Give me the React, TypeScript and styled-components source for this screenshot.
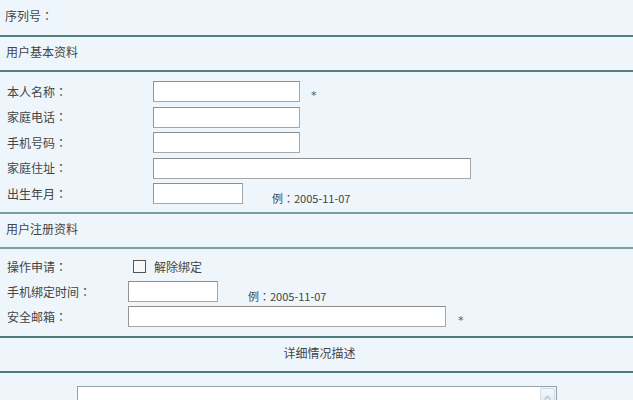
import React from "react";
import styled, { createGlobalStyle } from "styled-components";

const Global = createGlobalStyle`
  html, body { margin: 0; padding: 0; background: #eef6fc; }
  body {
    font-family: "Noto Sans CJK SC", "DejaVu Sans", sans-serif;
    font-size: 12px;
    color: #444;
    width: 633px;
    height: 400px;
    overflow: hidden;
  }
`;

const Page = styled.div`
  width: 633px;
  height: 400px;
  overflow: hidden;
  background: #eef6fc;
`;

const Rule = styled.div<{ $tone?: string }>`
  height: 2px;
  background: ${(p) => p.$tone || "#5f8b8c"};
`;

const TopRow = styled.div`
  height: 35px;
  display: flex;
  align-items: center;
  padding: 0 0 4px 5px;
  box-sizing: border-box;
  line-height: 1;
`;

const Header = styled.div<{ $center?: boolean }>`
  height: 33px;
  display: flex;
  align-items: center;
  justify-content: ${(p) => (p.$center ? "center" : "flex-start")};
  padding: 0 0 3px 6px;
  box-sizing: border-box;
  line-height: 1;
`;

const Body = styled.div<{ $top: number; $bottom: number }>`
  padding: ${(p) => p.$top}px 0 ${(p) => p.$bottom}px 0;
  display: flex;
  flex-direction: column;
`;

const Row = styled.div<{ $h?: number }>`
  height: ${(p) => p.$h || 25}px;
  display: flex;
  align-items: center;
`;

const Label = styled.div<{ $w: number }>`
  width: ${(p) => p.$w}px;
  flex: none;
  padding-left: 7px;
  box-sizing: border-box;
  line-height: 1;
  white-space: nowrap;
`;

const Colon = styled.span`
  font-family: "Noto Sans CJK TC", "Noto Sans CJK SC", sans-serif;
`;

const Input = styled.div<{ $w: number }>`
  width: ${(p) => p.$w}px;
  height: 21px;
  box-sizing: border-box;
  background: #fff;
  border: 1px solid #a7a7a7;
  border-top-color: #8f8f8f;
  border-left-color: #959595;
  flex: none;
`;

const Star = styled.span<{ $gap: number }>`
  margin-left: ${(p) => p.$gap}px;
  font-family: "DejaVu Sans", sans-serif;
  font-size: 11px;
  color: #555;
  position: relative;
  top: 4px;
`;

const Hint = styled.span<{ $gap: number }>`
  margin-left: ${(p) => p.$gap}px;
  position: relative;
  top: 4px;
  font-size: 11px;
  color: #444;
  white-space: nowrap;
`;

const Check = styled.span`
  width: 11px;
  height: 11px;
  border: 1px solid #555;
  background: #f8f8f8;
  margin-left: 5px;
  flex: none;
`;

const CheckText = styled.span`
  margin-left: 8px;
  line-height: 1;
`;

const AreaWrap = styled.div`
  padding: 13px 0 0 77px;
`;

const Area = styled.div`
  width: 480px;
  height: 60px;
  box-sizing: border-box;
  background: #fff;
  border: 1px solid #93a3a6;
  display: flex;
  justify-content: flex-end;
`;

const ScrollCol = styled.div`
  width: 16px;
  background: #f3f6f9;
  display: flex;
  flex-direction: column;
`;

const ScrollBtn = styled.div`
  height: 16px;
  margin: 1px 1px 0 0;
  border: 1px solid #d2dbe4;
  border-radius: 2px;
  background: linear-gradient(#f5f8fb, #dfe7ef);
  display: flex;
  align-items: center;
  justify-content: center;
`;

const L = ({ w, text }: { w: number; text: string }) => (
  <Label $w={w}>
    {text}
    <Colon>：</Colon>
  </Label>
);

export default function App() {
  return (
    <Page>
      <Global />
      <TopRow>
        序列号<Colon>：</Colon>
      </TopRow>
      <Rule $tone="#557f80" />
      <Header>用户基本资料</Header>
      <Rule $tone="#557f80" />
      <Body $top={7} $bottom={5.5}>
        <Row $h={25.5}>
          <L w={153} text="本人名称" />
          <Input $w={147} />
          <Star $gap={11}>*</Star>
        </Row>
        <Row $h={25.5}>
          <L w={153} text="家庭电话" />
          <Input $w={147} />
        </Row>
        <Row $h={25.5}>
          <L w={153} text="手机号码" />
          <Input $w={147} />
        </Row>
        <Row $h={25.5}>
          <L w={153} text="家庭住址" />
          <Input $w={318} />
        </Row>
        <Row $h={25.5}>
          <L w={153} text="出生年月" />
          <Input $w={90} />
          <Hint $gap={29}>
            例<Colon>：</Colon>2005-11-07
          </Hint>
        </Row>
      </Body>
      <Rule $tone="#7aa0a1" />
      <Header>用户注册资料</Header>
      <Rule $tone="#7aa0a1" />
      <Body $top={5} $bottom={7}>
        <Row>
          <L w={128} text="操作申请" />
          <Check />
          <CheckText>解除绑定</CheckText>
        </Row>
        <Row>
          <L w={128} text="手机绑定时间" />
          <Input $w={90} />
          <Hint $gap={30}>
            例<Colon>：</Colon>2005-11-07
          </Hint>
        </Row>
        <Row>
          <L w={128} text="安全邮箱" />
          <Input $w={318} />
          <Star $gap={12}>*</Star>
        </Row>
      </Body>
      <Rule $tone="#4f7b7c" />
      <Header $center>详细情况描述</Header>
      <Rule $tone="#4f7b7c" />
      <AreaWrap>
        <Area>
          <ScrollCol>
            <ScrollBtn>
              <svg width="7" height="5" viewBox="0 0 7 5">
                <path d="M0.5 4.5 L3.5 1.2 L6.5 4.5" fill="none" stroke="#b8c4d0" strokeWidth="1.4" />
              </svg>
            </ScrollBtn>
          </ScrollCol>
        </Area>
      </AreaWrap>
    </Page>
  );
}
